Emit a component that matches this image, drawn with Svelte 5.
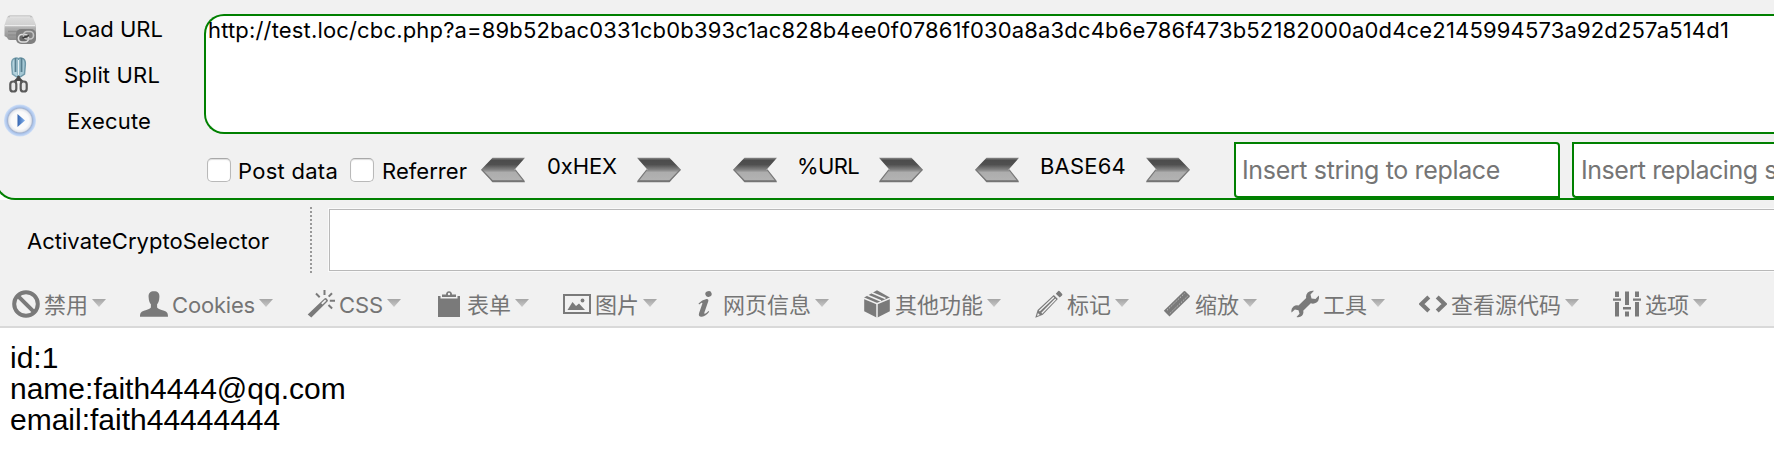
<script>
  const actions = [
    { icon: 'load', label: 'Load URL', pad: 26, w: 101 },
    { icon: 'split', label: 'Split URL', pad: 28, w: 96 },
    { icon: 'run', label: 'Execute', pad: 31, w: 84 }
  ];
  const url = 'http://test.loc/cbc.php?a=89b52bac0331cb0b393c1ac828b4ee0f07861f030a8a3dc4b6e786f473b52182000a0d4ce2145994573a92d257a514d1';
  const codecs = [
    { label: '0xHEX', before: 22, w: 70, after: 20, gap: 52 },
    { label: '%URL', before: 20, w: 62, after: 20, gap: 52 },
    { label: 'BASE64', before: 21, w: 86, after: 20, gap: 0 }
  ];
  const menu = [
    { icon: 'ban', label: '禁用', w: 44 },
    { icon: 'user', label: 'Cookies', w: 83 },
    { icon: 'wand', label: 'CSS', w: 44 },
    { icon: 'clip', label: '表单', w: 44 },
    { icon: 'image', label: '图片', w: 44 },
    { icon: 'info', label: '网页信息', w: 88 },
    { icon: 'box', label: '其他功能', w: 88 },
    { icon: 'pencil', label: '标记', w: 44 },
    { icon: 'ruler', label: '缩放', w: 44 },
    { icon: 'wrench', label: '工具', w: 44 },
    { icon: 'code', label: '查看源代码', w: 110 },
    { icon: 'sliders', label: '选项', w: 44 }
  ];
  const result = ['id:1', 'name:faith4444@qq.com', 'email:faith44444444'];

  // Tracks the text so that it takes the given width.
  function fit(node, width) {
    const natural = node.getBoundingClientRect().width;
    node.style.letterSpacing = (width - natural) / node.textContent.length + 'px';
  }
</script>

{#snippet arrow(flip)}
  <svg class="arrow" class:flip width="44" height="26" viewBox="0 0 44 26">
    <defs>
      <linearGradient id="steel" x1="0" y1="0" x2="0" y2="1">
        <stop offset="0" stop-color="#8a8a8a" />
        <stop offset=".1" stop-color="#4c4c4c" />
        <stop offset=".28" stop-color="#505050" />
        <stop offset=".5" stop-color="#868686" />
        <stop offset=".6" stop-color="#adadad" />
        <stop offset=".9" stop-color="#b2b2b2" />
        <stop offset=".94" stop-color="#707070" />
        <stop offset="1" stop-color="#777" />
      </linearGradient>
    </defs>
    <path d="M0 12.700 11.500.8H44L33.500 12.700 44 25.200H11.500Z" fill="url(#steel)" />
    <path d="M.7 12.700 12 24.500M34 12.700l9.500 12" stroke="#777" stroke-width="1.200" fill="none" />
  </svg>
{/snippet}

<section class="hackbar">
  <div class="top">
    <div class="actions">
      {#each actions as a}
        <div class="action">
          <svg width="32" height="36" viewBox="0 0 32 36">
            {#if a.icon === 'load'}
              <defs>
                <linearGradient id="drive" x1="0" y1="0" x2="0" y2="1">
                  <stop offset="0" stop-color="#b0b0b0" /><stop offset=".1" stop-color="#dcdcdc" />
                  <stop offset=".42" stop-color="#cfcfcf" /><stop offset=".5" stop-color="#b2b2b2" /><stop offset="1" stop-color="#8c8c8c" />
                </linearGradient>
              </defs>
              <path d="M6 4.500h20q2.200 0 3 2L32 14v12q0 3-3 3H6q-2 0-3-2.500L.5 25V14L3 6.500q.8-2 3-2Z" fill="url(#drive)" />
              <path d="M1 14.500h30M6 6h20" stroke="#ececec" stroke-width="1.200" />
              <path d="M4 20.500h10M4 24h8" stroke="#8e8e8e" stroke-width="1.500" />
              <rect x="12" y="18" width="20" height="15" rx="5" fill="#808080" />
              <rect x="14.500" y="23.500" width="10" height="7.500" rx="3.500" fill="#6a6a6a" stroke="#dedede" stroke-width="1.600" />
              <rect x="19.500" y="20.500" width="10" height="7.500" rx="3.500" fill="none" stroke="#c4c4c4" stroke-width="1.600" />
              <path d="M18.500 27 25 24.500" stroke="#3c3c3c" stroke-width="1.800" />
            {:else if a.icon === 'split'}
              <path d="M11 1.200Q7 2 7.800 9L8.500 17l5 3.500 1-2V1.800Q13 .5 11 1.200Z" fill="#b4d3de" stroke="#7ba2b1" stroke-width="1.500" />
              <path d="M18 1.200q4 .8 3.200 7.800l-.7 8-5 3.500-1-2V1.800Q16 .5 18 1.200Z" fill="#a5c8d5" stroke="#6f98a8" stroke-width="1.500" />
              <path d="M11.500 1v14M17.500 1v14" stroke="#587f90" stroke-width="1.800" />
              <path d="M14.500 3v15" stroke="#e4eff3" stroke-width="1" />
              <path d="M14.500 19v5M14.500 21l-4 4M14.500 21l4 4" stroke="#4a4a4a" stroke-width="2.600" />
              <rect x="6.300" y="24.500" width="6" height="10" rx="2.800" fill="#e8e8e8" stroke="#5a5a5a" stroke-width="2.200" />
              <rect x="16.700" y="24.500" width="6" height="10" rx="2.800" fill="#e8e8e8" stroke="#5a5a5a" stroke-width="2.200" />
            {:else}
              <defs>
                <radialGradient id="disc">
                  <stop offset=".55" stop-color="#fafafa" /><stop offset=".7" stop-color="#e6e8ed" />
                  <stop offset=".78" stop-color="#a3b3cf" /><stop offset=".84" stop-color="#abc4ec" /><stop offset="1" stop-color="#cfe0f8" />
                </radialGradient>
                <linearGradient id="play"><stop stop-color="#3464b0" /><stop offset="1" stop-color="#83b2ee" /></linearGradient>
              </defs>
              <circle cx="16" cy="17.500" r="16" fill="url(#disc)" />
              <path d="M13.500 11 21 17.500l-7.500 6.500Z" fill="url(#play)" />
            {/if}
          </svg>
          <span class="box" style:width="{a.w}px" style:margin-left="{a.pad}px"><span use:fit={a.w}>{a.label}</span></span>
        </div>
      {/each}
    </div>
    <div class="url"><span use:fit={1521}>{url}</span></div>
  </div>

  <div class="tools">
    <i class="check"></i>
    <span class="box post"><span use:fit={100}>Post data</span></span>
    <i class="check"></i>
    <span class="box ref"><span use:fit={85}>Referrer</span></span>
    {#each codecs as c}
      {@render arrow(false)}
      <span class="box codec" style:width="{c.w}px" style:margin-left="{c.before}px" style:margin-right="{c.after}px"><span use:fit={c.w}>{c.label}</span></span>
      <span class="box" style:margin-right="{c.gap}px">{@render arrow(true)}</span>
    {/each}
    <div class="field first"><span use:fit={258}>Insert string to replace</span></div>
    <div class="field last"><span use:fit={248}>Insert replacing string</span></div>
  </div>
</section>

<section class="crypto">
  <span class="box name"><span use:fit={242}>ActivateCryptoSelector</span></span>
  <i class="dots"></i>
  <div class="entry"></div>
</section>

<nav>
  {#each menu as m}
    <div class="item">
      <svg width="28" height="28" viewBox="0 0 28 28" fill="#7a7a7a">
        {#if m.icon === 'ban'}
          <g fill="none" stroke="#7a7a7a" stroke-width="4"><circle cx="14" cy="14" r="11.800" /><path d="m5.800 5.800 16.400 16.400" /></g>
        {:else if m.icon === 'user'}
          <path d="M14 1.200c3.800 0 5.600 2 5.400 5.800-.2 4-1.200 6-2.300 7.300v3.200c1 1.600 3.500 2.200 7 3.300 3 1 3.900 2.500 3.900 6H0c0-3.500.9-5 3.900-6 3.500-1.100 6-1.700 7-3.300v-3.200C9.800 13 8.800 11 8.600 7 8.400 3.200 10.200 1.200 14 1.200Z" />
        {:else if m.icon === 'wand'}
          <path d="m.7 24.500 16.800-16q1-1 2.100.1l.8.8q1.100 1.100.1 2.100L4.300 27.500Z" />
          <path d="m14.800 13.900 3.900-3.800" stroke="#f1f1f1" stroke-width="1.800" />
          <path d="M17.500 0v5M9 3.500l3.700 3.700M25 3.300l-3.300 3.300M22.800 10.800H28M21.500 15l3.600 3.500" stroke="#7a7a7a" stroke-width="2" />
        {:else if m.icon === 'clip'}
          <path d="M3 6h2.500v2.500h17V6H25v21H3Z" />
          <path d="M7 7V4.500h4C11 2.500 12 1.200 14 1.200s3 1.300 3 3.300h4V7Z" /><circle cx="14" cy="4" r="1.200" fill="#f1f1f1" />
        {:else if m.icon === 'image'}
          <rect x="1" y="5" width="26" height="18" fill="none" stroke="#7a7a7a" stroke-width="2" />
          <path d="m4.500 20 5-8 3.500 4 3-2.500 6 6.500Z" /><circle cx="19.500" cy="10.500" r="1.900" />
        {:else if m.icon === 'info'}
          <ellipse cx="17.500" cy="4" rx="3.200" ry="2.900" transform="rotate(-15 17.500 4)" />
          <path d="M7.500 13.500q3.500-3.800 8-4.500 2.500-.2 1.700 2.500l-3.800 11q-.4 1.500.6 1.200 1.500-.6 3.500-2.700l.7.8q-3.500 4.500-7.300 5-4 .3-2.800-3.700l3.200-9.300q.4-1.300-.7-1-1 .4-2.500 1.700Z" />
        {:else if m.icon === 'box'}
          <path d="M14 .3 26.800 7.500v13.700L14 27.700 1.200 21.200V7.500Z" />
          <path d="M1 8.300 14 13.800 27 8.300M14 13.800V28" fill="none" stroke="#f1f1f1" stroke-width="1.500" />
          <path d="M4.300 5.300 18 11M8.800 2.800 22.500 8.500" stroke="#f1f1f1" stroke-width="1.600" />
        {:else if m.icon === 'pencil'}
          <path d="M.3 27.800 2.600 20 18.800 5l4 4L7.800 24.700Z" />
          <path d="m4.300 21 14.600-13.700M6.800 23.200 20.700 9" stroke="#f1f1f1" stroke-width="1.300" />
          <path d="m2 25.900.9-3 2 2Z" fill="#f1f1f1" />
          <path d="m20.800 3.700 2-2.300q1-1 1.900-.1l2.300 2.400q.9.900 0 1.800l-2.300 2.100Z" />
        {:else if m.icon === 'ruler'}
          <path d="M.8 20.700 20.800 1.200q.7-.6 1.400 0l4.400 4.300q.6.700 0 1.400L6.500 26.500Z" />
          <path d="M4 20.300 21.500 3.300M6.800 23.500 24.500 6.300" stroke="#c4c4c4" stroke-width="1" stroke-dasharray="1.400 1.200" />
        {:else if m.icon === 'wrench'}
          <path d="M23 .8 19.500 4.500l1 4 4 .4 3.300-3.400q1 4.500-2.300 7-2.600 1.800-5.700.8l-7.600 7.500q.8 2.700-1.200 5-2.200 2-5.500 1.300l3-3.400-1-3.400-3.600-.7L.6 22.500q-1-3.700 1.900-6 2.300-1.700 5-1l7.700-7.600q-.7-3.200 1.600-5.500Q19.300.2 23 .8Z" />
        {:else if m.icon === 'code'}
          <path d="M9.800 7 2.500 14l7.300 7M18.200 7l7.300 7-7.300 7" fill="none" stroke="#7a7a7a" stroke-width="4.200" />
        {:else}
          <path d="M2 1.500h4V7H2zM2 12h4v14.500H2zM0 8.500h8v2.300H0zM12 1.500h4V15h-4zM12 21.500h4v5h-4zM10 17h8v2.500h-8zM22 1.500h4V7h-4zM22 12h4v14.500h-4zM20 8.500h8v2.300h-8z" />
        {/if}
      </svg>
      <span class="box label" style:width="{m.w}px"><span use:fit={m.w}>{m.label}</span></span>
      <i class="caret"></i>
    </div>
  {/each}
</nav>

<main>
  {#each result as line}<div>{line}</div>{/each}
</main>

<style>
  :global(body) { background: #fff; overflow: hidden; }
  section, nav { background: #f1f1f1; box-sizing: border-box; font: 22px/46px Inter, "Noto Sans CJK SC", sans-serif; color: #000; }
  span { white-space: nowrap; }
  svg { display: block; flex: none; }
  .box { flex: none; display: block; }
  .box > span, .url > span, .field > span { display: inline-block; }
  .hackbar {
    height: 200px; margin-left: -5px; padding-left: 3px; overflow: hidden;
    border: solid green; border-width: 0 0 2px 2px; border-radius: 0 0 0 20px;
  }
  .top { display: flex; height: 134px; }
  .actions { width: 204px; flex: none; padding: 6px 0 0 4px; box-sizing: border-box; }
  .action { display: flex; align-items: center; height: 46px; }
  .url {
    flex: 1; min-width: 0; margin-top: 14px; box-sizing: border-box; height: 120px; border: 2px solid green; border-right: 0;
    border-radius: 20px 0 0 20px; background: #fff; padding-left: 2px; line-height: 28px;
  }
  .tools { display: flex; height: 64px; padding-left: 207px; align-items: flex-start; }
  .check {
    flex: none; width: 24px; height: 24px; margin-top: 24px; box-sizing: border-box; background: #fff;
    border: 1px solid #b9b9b9; border-top-color: #a8a8a8; border-radius: 5px; box-shadow: inset 0 1px 1px #ddd;
  }
  .post { width: 101px; margin: 14px 11px 0 7px; }
  .ref { width: 86px; margin: 14px 13px 0 8px; }
  .codec { margin-top: 9px; }
  .arrow { margin-top: 22.500px; }
  .flip { transform: scaleX(-1); }
  .field {
    flex: none; box-sizing: border-box; height: 56px; margin-top: 8px; background: #fff;
    border: 2px solid green; border-radius: 0 4px 0 4px; padding-left: 6px; font-size: 25px; line-height: 52px; color: #757575;
  }
  .first { width: 326px; margin-left: 44px; margin-right: 12px; }
  .last { flex: 1; min-width: 0; border-right: 0; border-top-right-radius: 0; overflow: hidden; padding-left: 7px; }
  .crypto { display: flex; height: 80px; }
  .name { width: 243px; margin: 18px 40px 0 27px; }
  .dots {
    width: 2px; height: 66px; margin-top: 7px;
    background: repeating-linear-gradient(#999 0 2px, transparent 2px 4px);
  }
  .entry { flex: 1; height: 62px; margin: 9px 0 0 17px; box-sizing: border-box; border: 1px solid #b9b9b9; border-right: 0; background: #fff; box-shadow: 0 0 0 1px #fafafa; }
  nav { display: flex; height: 48px; gap: 34px; padding-left: 12px; border-bottom: 2px solid #d9d9d9; }
  .item { display: flex; flex: none; gap: 4px; padding-top: 10px; align-items: flex-start; color: #757575; }
  .label { line-height: 30px; }
  .caret { width: 14px; height: 8px; margin-top: 9px; clip-path: polygon(0 0, 100% 0, 50% 100%); background: linear-gradient(#a5a5a5, #c8c8c8); }
  main { padding: 14px 10px; font: 30px/31px "Liberation Sans", Arial, sans-serif; color: #000; }
</style>
